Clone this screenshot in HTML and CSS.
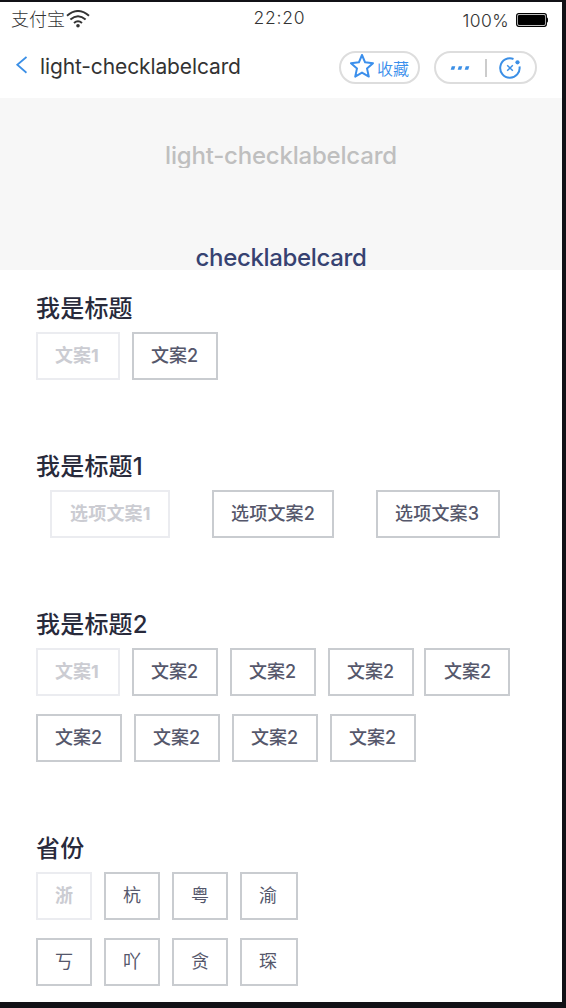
FILE: index.html
```html
<!DOCTYPE html>
<html lang="zh-CN">
<head>
<meta charset="utf-8">
<title>light-checklabelcard</title>
<link rel="stylesheet" href="styles.css">
</head>
<body>
<main class="phone">
  <div class="status">
    <div class="carrier"><span>支付宝</span>
      <svg class="wifi" width="24" height="18" viewBox="0 0 24 18" fill="none" stroke="#333" stroke-width="2"><path d="M1 5.7Q12-3.7 23 5.7M4.4 9.6Q12 3 19.6 9.6M8 13Q12 9.6 16 13"/><circle cx="12" cy="15.7" r="1.8" fill="#333" stroke="none"/></svg>
    </div>
    <span class="time">22:20</span>
    <div class="power"><span>100%</span>
      <svg width="32" height="14" viewBox="0 0 32 14"><rect x=".7" y=".7" width="29.6" height="12.6" rx="2" fill="#fff" stroke="#000" stroke-width="1.3"/><rect x="2" y="2" width="27" height="10" rx="1"/><path d="M30.5 4.5h.7q.8 0 .8 2.5t-.8 2.5h-.7z"/></svg>
    </div>
  </div>
  <nav class="nav">
    <svg class="back" width="12" height="18" viewBox="0 0 12 18" fill="none" stroke="#3b8fe6" stroke-width="1.8"><path d="M11.5 1 2.3 8.8 11.5 16.7"/></svg>
    <span class="nav-title">light-checklabelcard</span>
    <div class="pill favorite">
      <svg width="24" height="24" viewBox="0 0 24 24" fill="none" stroke="#3b8fec" stroke-width="2" stroke-linejoin="round"><path d="M12 1 15.1 8.3 23 9.2 17 14.4 18.8 22.6 12 18.6 5.2 22.6 7 14.4 1 9.2 8.9 8.3Z"/></svg>
      <span>收藏</span>
    </div>
    <div class="pill actions">
      <svg width="20" height="4" viewBox="0 0 20 4" fill="#3b8fe6"><path d="M1.8.3H5.3L4.2 3.7H.7ZM8.8.3h3.5L11.2 3.7H7.7ZM15.8.3h3.5L18.2 3.7h-3.5Z"/></svg>
      <i class="divider"></i>
      <svg width="22" height="22" viewBox="0 0 22 22" fill="none" stroke="#3b8fe6" stroke-width="2"><path d="M14.5 2A9.7 9.7 0 1 0 20.5 9.5"/><path d="m8.2 8.2 5.6 5.6m0-5.6-5.6 5.6" stroke-width="1.5"/><circle cx="18.5" cy="5.3" r="2.1" fill="#3b8fe6" stroke="none"/></svg>
    </div>
  </nav>
  <header class="banner">
    <div class="banner-name">light-checklabelcard</div>
    <div class="banner-sub">checklabelcard</div>
  </header>
  <section class="group">
    <h2>我是标题</h2>
    <div class="tags"><span class="tag short disabled">文案1</span><span class="tag">文案2</span></div>
  </section>
  <section class="group">
    <h2>我是标题1</h2>
    <div class="tags spread"><span class="tag option-a disabled">选项文案1</span><span class="tag option-b">选项文案2</span><span class="tag option-c">选项文案3</span></div>
  </section>
  <section class="group">
    <h2>我是标题2</h2>
    <div class="tags"><span class="tag short disabled">文案1</span><span class="tag">文案2</span><span class="tag">文案2</span><span class="tag">文案2</span><span class="tag row-end">文案2</span></div>
    <div class="tags"><span class="tag">文案2</span><span class="tag">文案2</span><span class="tag">文案2</span><span class="tag">文案2</span></div>
  </section>
  <section class="group">
    <h2>省份</h2>
    <div class="tags"><span class="tag single disabled">浙</span><span class="tag single">杭</span><span class="tag single">粤</span><span class="tag single wide">渝</span></div>
    <div class="tags"><span class="tag single">丂</span><span class="tag single">吖</span><span class="tag single">贪</span><span class="tag single wide">琛</span></div>
  </section>
</main>
</body>
</html>
```
FILE: styles.css
```css
* { box-sizing: border-box; }
body {
  margin: 0;
  padding: 2px 4px 6px 0;
  height: 1008px;
  background: #111116;
  font-family: Inter, "Noto Sans CJK SC", sans-serif;
}
.phone { height: 1000px; background: #fff; overflow: hidden; }
.status {
  display: grid;
  grid-template-columns: 1fr auto 1fr;
  height: 32px;
  padding: 0 14px 0 11px;
  color: #333;
  font-size: 18px;
  line-height: 32px;
}
.carrier, .power { display: flex; align-items: center; }
.carrier span { font-weight: 300; }
.wifi { margin: -1px 0 0 1px; }
.time { letter-spacing: 0.8px; font-size: 17.5px; font-weight: 350; }
.power { justify-content: flex-end; gap: 7px; font-size: 17.5px; font-weight: 350; letter-spacing: 0.4px; }
.power span { padding-top: 3px; }
.nav { display: flex; align-items: center; height: 64px; padding: 3px 25px 0 15px; }
.back { margin-top: -6px; }
.nav-title { margin-left: 13px; width: 299px; color: #333; font-size: 21px; letter-spacing: -0.12px; margin-top: -2px; white-space: nowrap; }
.pill { display: flex; align-items: center; height: 33px; border: 2px solid #ddd; border-radius: 17px; flex: none; }
.favorite { width: 81px; padding-left: 9px; color: #3b8fec; font-size: 16px; font-weight: 350; }
.favorite svg { margin-top: -4px; }
.favorite span { margin: 1px 0 0 3px; white-space: nowrap; }
.actions { width: 103px; margin-left: 14px; padding-left: 14px; }
.divider { width: 2px; height: 18px; margin: 0 12px 0 15px; background: #ccc; }
.banner { height: 172px; padding-top: 42px; background: #f7f7f7; text-align: center; font-size: 24px; font-weight: 500; line-height: 32px; letter-spacing: -0.2px; }
.banner-name { height: 28px; overflow: hidden; color: #bfbfbf; }
.banner-sub { margin-top: 74px; height: 28px; line-height: 31px; color: #364271; letter-spacing: -0.35px; }
.group { padding: 20px 0 0 36px; margin-bottom: 48px; }
.group:first-of-type { padding-top: 20px; }
.group h2 { margin: 0 0 6px; height: 36px; color: #282a3b; font-size: 24px; line-height: 37px; font-weight: 500; letter-spacing: 0.2px; }
.tags { display: flex; gap: 12px; }
.tags + .tags { margin-top: 18px; }
.spread { gap: 42px; padding-left: 14px; }
.tag { width: 86px; height: 48px; padding-left: 17px; border: 2px solid #c9ccd0; color: #55576b; font-size: 18px; line-height: 44px; font-weight: 500; white-space: nowrap; }
.short { width: 84px; }
.row-end { width: 86px; margin-left: -2px; padding-left: 18px; }
.option-a { width: 120px; padding-left: 18px; }
.option-b { width: 122px; }
.option-c { width: 124px; }
.spread .tag { letter-spacing: 0.2px; }
.single { width: 56px; font-weight: 400; }
.wide { width: 58px; }
.disabled { border-color: #ebecf0; color: #cbccd2; font-weight: 700; }
```
